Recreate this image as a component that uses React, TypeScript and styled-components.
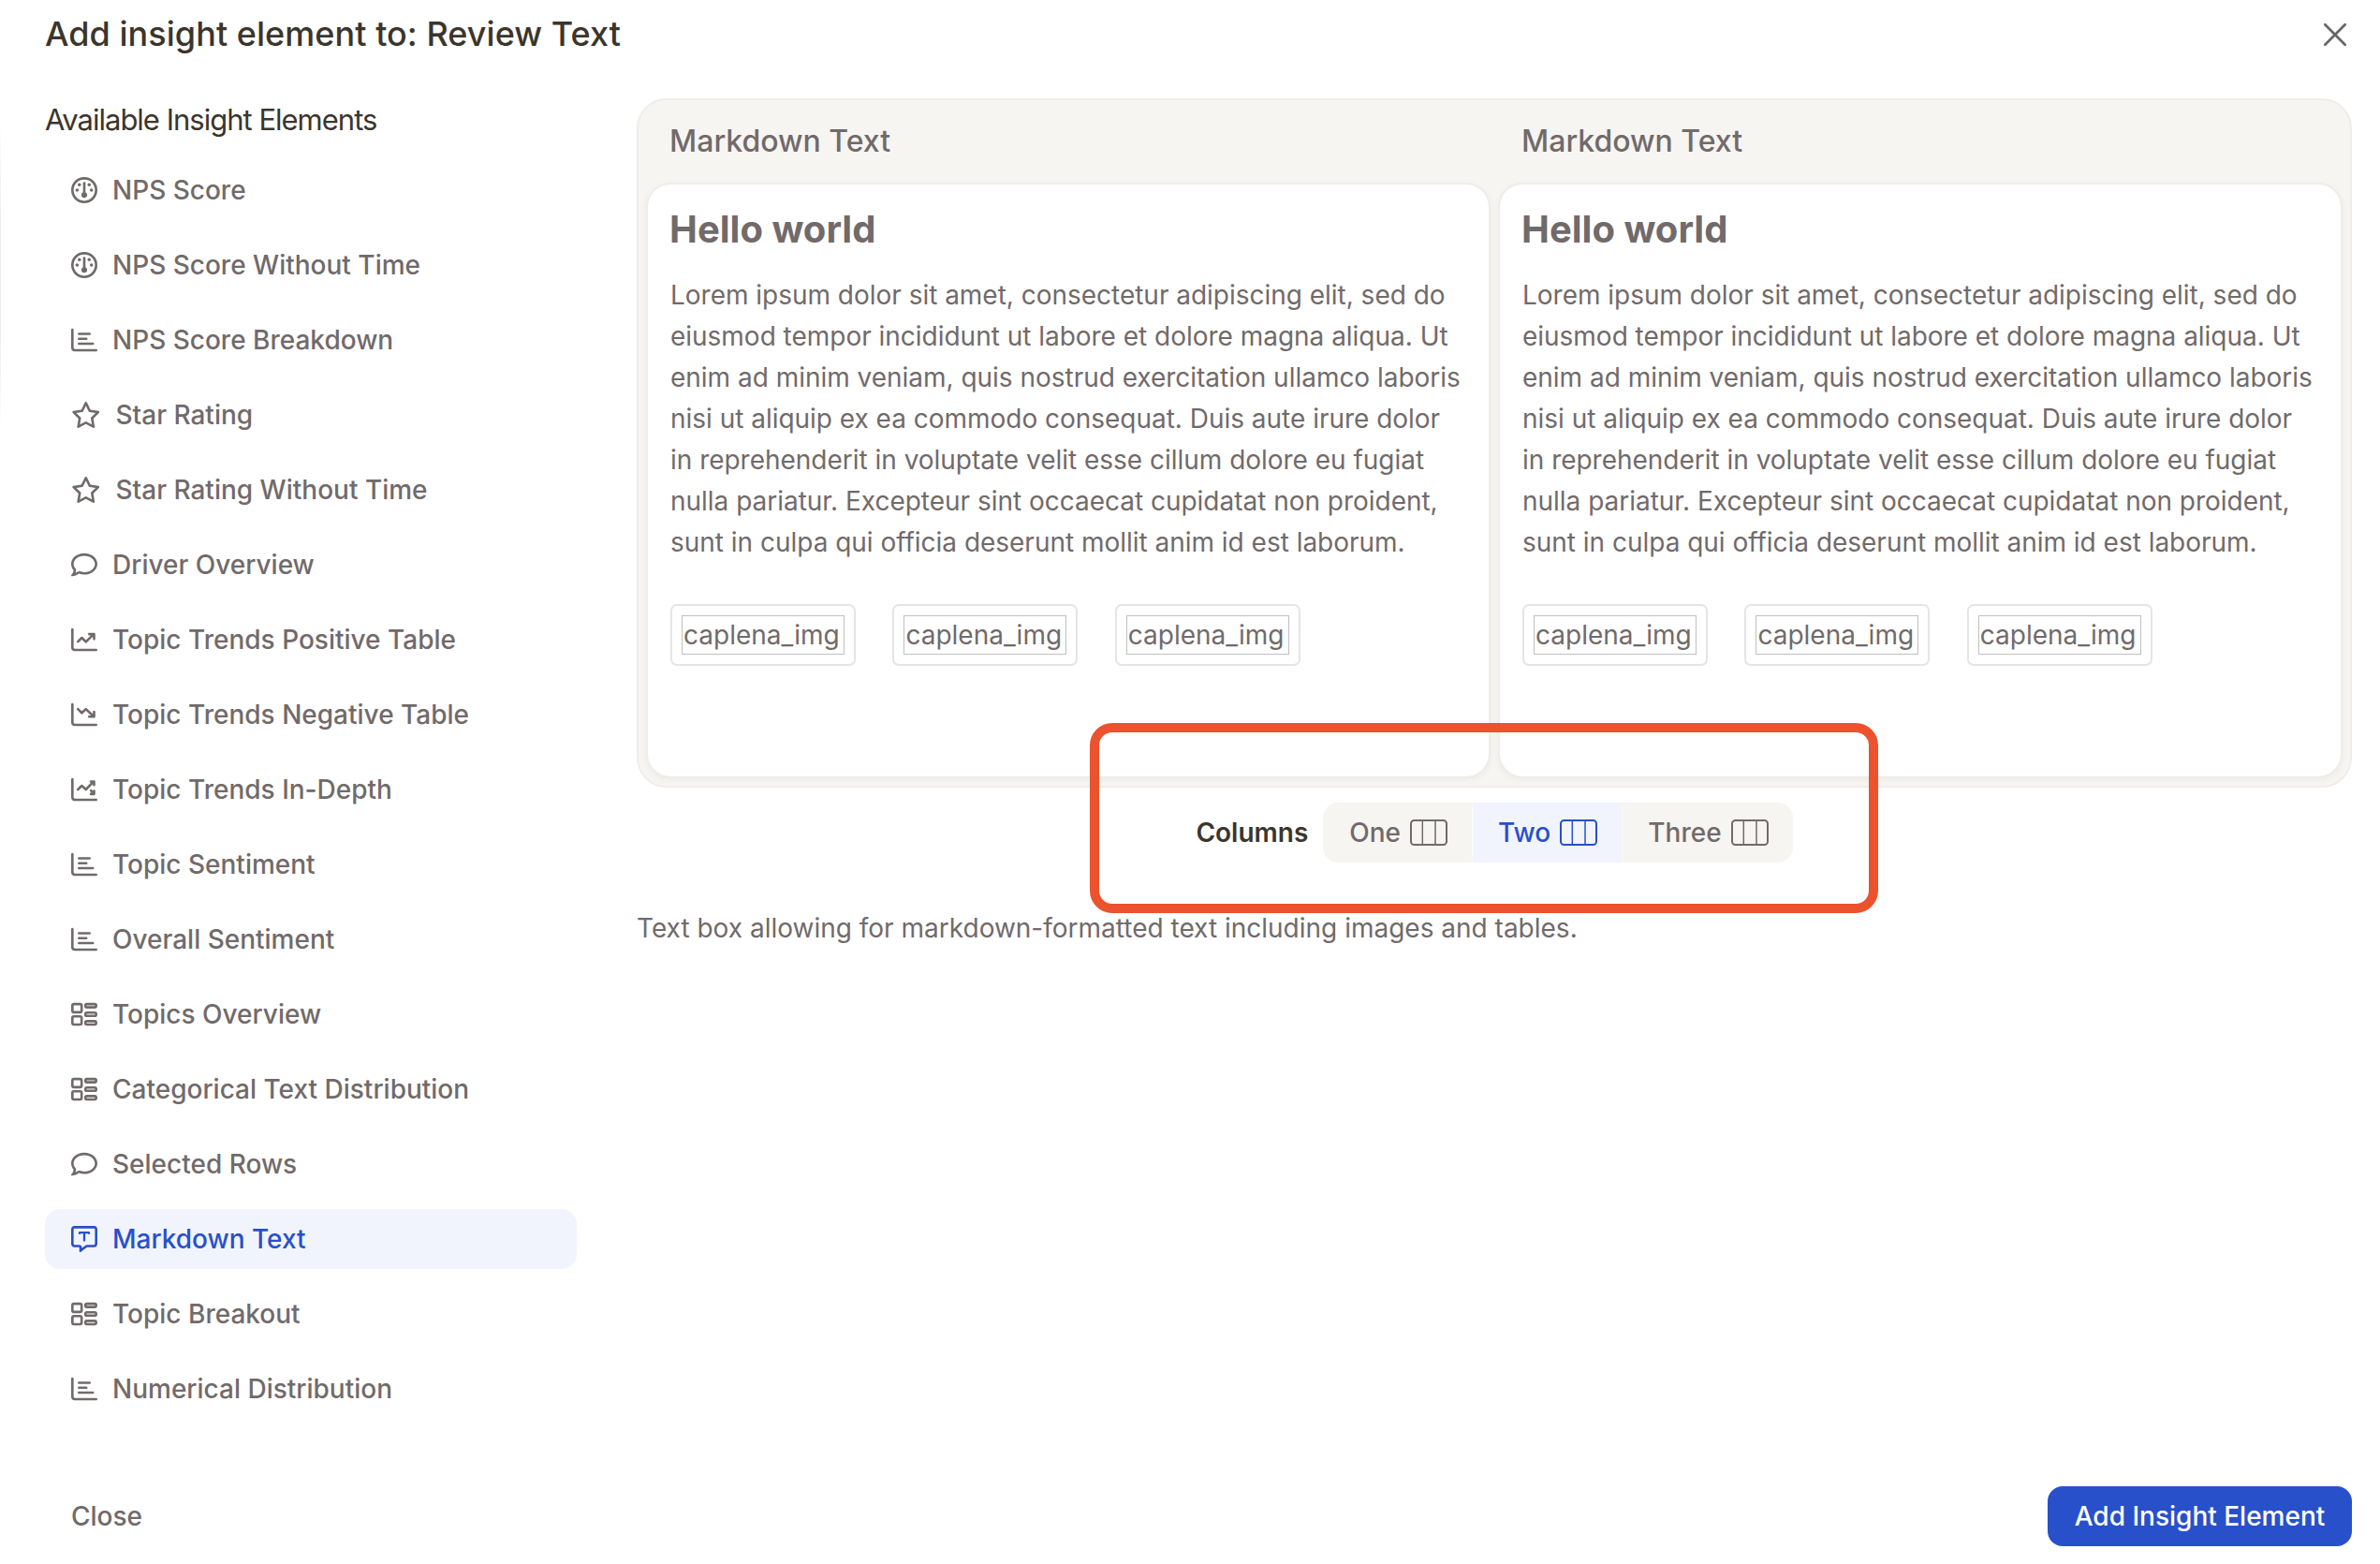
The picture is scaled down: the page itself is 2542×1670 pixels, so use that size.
import React from 'react';
import styled, { createGlobalStyle } from 'styled-components';
import { FaRegComment, FaRegStar } from 'react-icons/fa6';

const colors = {
  dark: '#3b352c',
  text: '#716a6a',
  blue: '#2850cb',
  blueSoft: '#f1f4fd',
  sand: '#f7f5f2',
  line: '#f0ede8',
  mark: '#eb522d',
};

const GlobalStyle = createGlobalStyle`
  * { box-sizing: border-box; }
  body {
    margin: 0;
    background: #fff;
    font-family: Inter, "Liberation Sans", sans-serif;
    font-size: 28px;
    color: ${colors.text};
  }
  button { font: inherit; letter-spacing: inherit; border: 0; cursor: pointer; }
  svg { display: block; }
`;

const Dialog = styled.div`
  width: 2542px;
  height: 1670px;
  padding: 0 30px 19px 48px;
  display: flex;
  flex-direction: column;
  background: linear-gradient(#fff, #ededed 30%, #ededed 70%, #fff) 0 130px / 1px 330px no-repeat #fff;
`;

const Header = styled.header`
  height: 105px;
  display: flex;
  justify-content: space-between;
  align-items: flex-start;
`;

const Title = styled.h1`
  margin: 0;
  padding-top: 14px;
  font-size: 36px;
  line-height: 44px;
  font-weight: 500;
  letter-spacing: 0.04px;
  color: ${colors.dark};
`;

const CloseIconButton = styled.button`
  width: 36px;
  height: 74px;
  padding: 0;
  background: none;
  color: #666;
`;

const Body = styled.div`
  flex: 1;
  display: flex;
  gap: 64px;
`;

const Sidebar = styled.aside`
  flex: none;
  width: 568px;
`;

const SidebarTitle = styled.h2`
  margin: 0;
  height: 66px;
  padding-top: 3px;
  font-size: 31px;
  line-height: 40px;
  font-weight: 400;
  letter-spacing: -1px;
  color: ${colors.dark};
`;

const ElementList = styled.nav`
  display: flex;
  flex-direction: column;
  gap: 16px;
`;

const ElementButton = styled.button<{ $active?: boolean }>`
  height: 64px;
  padding: 0 28px;
  display: flex;
  align-items: center;
  gap: 16px;
  border-radius: 16px;
  font-weight: 500;
  text-align: left;
  background: ${(p) => (p.$active ? colors.blueSoft : 'transparent')};
  color: ${(p) => (p.$active ? colors.blue : colors.text)};
`;

const IconSlot = styled.span<{ $wide?: boolean }>`
  display: flex;
  flex: none;
  svg {
    height: 28px;
    width: ${(p) => (p.$wide ? '31.5px' : '28px')};
  }
`;

const Main = styled.main`
  flex: 1;
  display: flex;
  flex-direction: column;
`;

const Preview = styled.section`
  height: 736px;
  padding: 0 8px 8px;
  display: grid;
  grid-template-columns: 1fr 1fr;
  gap: 8px;
  border: 2px solid ${colors.line};
  border-radius: 32px;
  background: ${colors.sand};
`;

const PreviewColumn = styled.div`
  display: flex;
  flex-direction: column;
`;

const PreviewTitle = styled.div`
  height: 88px;
  padding: 0 0 1px 25px;
  display: flex;
  align-items: center;
  font-size: 32px;
  font-weight: 500;
`;

const Card = styled.article`
  flex: 1;
  padding: 24px;
  border: 2px solid ${colors.line};
  border-bottom-color: #eeebe6;
  border-radius: 26px;
  background: #fff;
  background-clip: padding-box;
  box-shadow: 0 2px 6px rgba(60, 50, 30, 0.05);
`;

const CardHeading = styled.h3`
  margin: 0 0 24px -1px;
  font-size: 40px;
  line-height: 48px;
  font-weight: 700;
`;

const Paragraph = styled.p`
  margin: 0;
  line-height: 44px;
  letter-spacing: -0.02px;
  white-space: pre;
`;

const ImageRow = styled.div`
  display: flex;
  gap: 39.4px;
  margin-top: 44px;
`;

const ImageFrame = styled.div`
  width: 198px;
  height: 66px;
  padding: 10px;
  border: 2px solid #e5e5e5;
  border-radius: 7px;
`;

const ImageAlt = styled.div`
  height: 42px;
  padding-left: 1px;
  border: 1px solid #c0c0c0;
  line-height: 40px;
  white-space: nowrap;
`;

const ColumnsBar = styled.div`
  margin-top: 16px;
  height: 64px;
  display: flex;
  justify-content: center;
  align-items: center;
  gap: 16px;
`;

const ColumnsLabel = styled.span`
  font-weight: 600;
  color: ${colors.dark};
`;

const Segments = styled.div`
  height: 64px;
  display: flex;
  border-radius: 16px;
  overflow: hidden;
`;

const Segment = styled.button<{ $active?: boolean }>`
  padding: 0 26px 0 28px;
  display: flex;
  align-items: center;
  gap: 10px;
  font-weight: 500;
  background: ${(p) => (p.$active ? colors.blueSoft : colors.sand)};
  color: ${(p) => (p.$active ? colors.blue : colors.text)};
  & + & { padding-left: 27px; border-left: 1px solid #fbfafa; }
`;

const Description = styled.p`
  margin: 48px 0 0;
  line-height: 44px;
`;

const Footer = styled.footer`
  height: 64px;
  display: flex;
  justify-content: space-between;
`;

const TextButton = styled.button`
  padding: 0 28px;
  background: none;
  color: inherit;
  font-weight: 500;
`;

const PrimaryButton = styled.button`
  width: 325px;
  padding: 0;
  border-radius: 16px;
  background: ${colors.blue};
  color: #fff;
  font-weight: 500;
`;

const Highlight = styled.div`
  position: absolute;
  left: 1164px;
  top: 772px;
  width: 842px;
  height: 203px;
  border: 10px solid ${colors.mark};
  border-radius: 24px;
  pointer-events: none;
`;

const stroke = {
  fill: 'none',
  stroke: 'currentColor',
  strokeLinecap: 'round' as const,
  strokeLinejoin: 'round' as const,
};

const Gauge = () => (
  <svg viewBox="0 0 512 512" width="28" height="28">
    <circle cx="256" cy="256" r="232" {...stroke} strokeWidth="48" />
    <path d="M256 120V352" {...stroke} strokeWidth="48" />
    <g fill="currentColor">
      <circle cx="256" cy="352" r="56" />
      <circle cx="160" cy="152" r="32" />
      <circle cx="352" cy="152" r="32" />
      <circle cx="116" cy="256" r="32" />
      <circle cx="396" cy="256" r="32" />
    </g>
  </svg>
);

const Axis = ({ d }: { d: string }) => (
  <svg viewBox="0 0 512 512" width="28" height="28" {...stroke} strokeWidth="48">
    <path d="M24 56V408Q24 456 72 456H488" />
    <path d={d} />
  </svg>
);

const Bars = () => <Axis d="M152 136H360M152 232H296M152 328H424" />;
const LineUp = () => <Axis d="M132 296L208 220L288 300L440 148M352 148H448V244" />;
const LineDown = () => <Axis d="M132 148L208 224L288 148L440 292M352 296H448V200" />;
const LineMixed = () => (
  <Axis d="M132 256L208 184L288 256L436 104M384 100H448V168M388 276L440 340M384 344H448V284" />
);

const Grid = () => (
  <svg viewBox="0 0 512 512" width="28" height="28" {...stroke} strokeWidth="48">
    <rect x="24" y="56" width="180" height="160" rx="30" />
    <rect x="24" y="296" width="180" height="160" rx="30" />
    <rect x="278" y="56" width="210" height="66" rx="30" />
    <rect x="278" y="223" width="210" height="66" rx="30" />
    <rect x="278" y="390" width="210" height="66" rx="30" />
  </svg>
);

const MessageText = () => (
  <svg viewBox="0 0 512 512" width="28" height="28">
    <path
      fill="currentColor"
      d="M160 368c26.5 0 48 21.5 48 48v16l72.500-54.400c8.300-6.200 18.400-9.600 28.800-9.600H448c8.800 0 16-7.200 16-16V64c0-8.800-7.200-16-16-16H64c-8.800 0-16 7.200-16 16V352c0 8.800 7.200 16 16 16h96zm48 124l-.2 .2-5.100 3.800-17.100 12.800c-4.800 3.600-11.300 4.200-16.800 1.500s-8.800-8.200-8.800-14.300V474.700v-6.400V468v-4V416H112 64c-35.300 0-64-28.700-64-64V64C0 28.700 28.700 0 64 0H448c35.300 0 64 28.700 64 64V352c0 35.300-28.700 64-64 64H309.300L208 492z"
    />
    <path d="M164 144V132H348V144M256 132V284" {...stroke} strokeWidth="42" />
  </svg>
);

const ColumnsIcon = () => (
  <svg viewBox="0 0 40 28" width="40" height="28" {...stroke}>
    <rect x="1" y="1" width="38" height="26" rx="3.500" strokeWidth="2" />
    <path d="M13.300 1V27M27 1V27" strokeWidth="1.500" />
  </svg>
);

const CrossIcon = () => (
  <svg viewBox="0 0 36 36" width="36" height="36" {...stroke} strokeWidth="2.700">
    <path d="M7.300 7.300L28.700 28.700M28.700 7.300L7.300 28.700" />
  </svg>
);

const elements: { label: string; icon: React.ComponentType; active?: boolean }[] = [
  { label: 'NPS Score', icon: Gauge },
  { label: 'NPS Score Without Time', icon: Gauge },
  { label: 'NPS Score Breakdown', icon: Bars },
  { label: 'Star Rating', icon: FaRegStar },
  { label: 'Star Rating Without Time', icon: FaRegStar },
  { label: 'Driver Overview', icon: FaRegComment },
  { label: 'Topic Trends Positive Table', icon: LineUp },
  { label: 'Topic Trends Negative Table', icon: LineDown },
  { label: 'Topic Trends In-Depth', icon: LineMixed },
  { label: 'Topic Sentiment', icon: Bars },
  { label: 'Overall Sentiment', icon: Bars },
  { label: 'Topics Overview', icon: Grid },
  { label: 'Categorical Text Distribution', icon: Grid },
  { label: 'Selected Rows', icon: FaRegComment },
  { label: 'Markdown Text', icon: MessageText, active: true },
  { label: 'Topic Breakout', icon: Grid },
  { label: 'Numerical Distribution', icon: Bars },
];

const lorem = [
  'Lorem ipsum dolor sit amet, consectetur adipiscing elit, sed do',
  'eiusmod tempor incididunt ut labore et dolore magna aliqua. Ut',
  'enim ad minim veniam, quis nostrud exercitation ullamco laboris',
  'nisi ut aliquip ex ea commodo consequat. Duis aute irure dolor',
  'in reprehenderit in voluptate velit esse cillum dolore eu fugiat',
  'nulla pariatur. Excepteur sint occaecat cupidatat non proident,',
  'sunt in culpa qui officia deserunt mollit anim id est laborum.',
].join('\n');

const MarkdownPreview = () => (
  <PreviewColumn>
    <PreviewTitle>Markdown Text</PreviewTitle>
    <Card>
      <CardHeading>Hello world</CardHeading>
      <Paragraph>{lorem}</Paragraph>
      <ImageRow>
        {[0, 1, 2].map((i) => (
          <ImageFrame key={i}>
            <ImageAlt>caplena_img</ImageAlt>
          </ImageFrame>
        ))}
      </ImageRow>
    </Card>
  </PreviewColumn>
);

export default function App() {
  return (
    <>
      <GlobalStyle />
      <Dialog>
        <Header>
          <Title>Add insight element to: Review Text</Title>
          <CloseIconButton aria-label="Close dialog">
            <CrossIcon />
          </CloseIconButton>
        </Header>
        <Body>
          <Sidebar>
            <SidebarTitle>Available Insight Elements</SidebarTitle>
            <ElementList>
              {elements.map(({ label, icon: Icon, active }) => (
                <ElementButton key={label} $active={active}>
                  <IconSlot $wide={Icon === FaRegStar}>
                    <Icon />
                  </IconSlot>
                  {label}
                </ElementButton>
              ))}
            </ElementList>
          </Sidebar>
          <Main>
            <Preview>
              <MarkdownPreview />
              <MarkdownPreview />
            </Preview>
            <ColumnsBar>
              <ColumnsLabel>Columns</ColumnsLabel>
              <Segments>
                {['One', 'Two', 'Three'].map((name) => (
                  <Segment key={name} $active={name === 'Two'}>
                    {name}
                    <ColumnsIcon />
                  </Segment>
                ))}
              </Segments>
            </ColumnsBar>
            <Description>
              Text box allowing for markdown-formatted text including images and tables.
            </Description>
          </Main>
        </Body>
        <Footer>
          <TextButton>Close</TextButton>
          <PrimaryButton>Add Insight Element</PrimaryButton>
        </Footer>
        <Highlight />
      </Dialog>
    </>
  );
}
